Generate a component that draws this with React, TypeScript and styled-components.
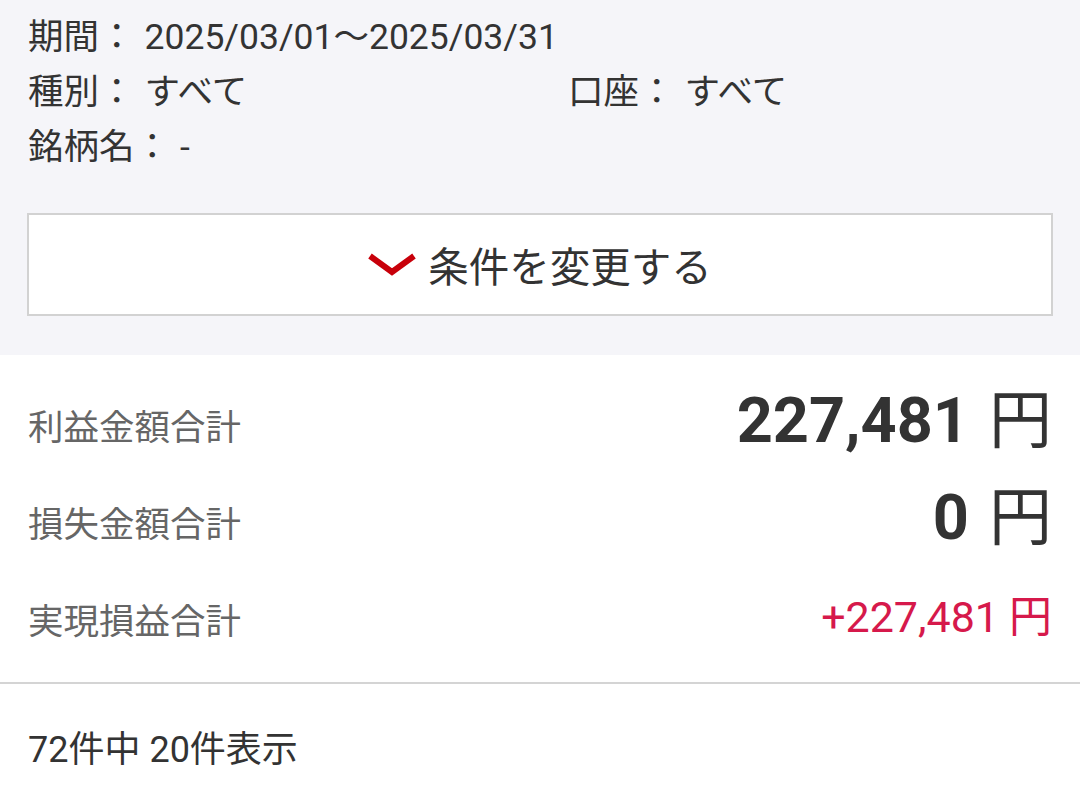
import styled, { createGlobalStyle } from 'styled-components';

const GlobalStyle = createGlobalStyle`
    html, body {
        margin: 0;
        padding: 0;
        background: #ffffff;
        font-family: Roboto, "Noto Sans CJK JP", sans-serif;
        color: #333333;
    }
`;

const Conditions = styled.section`
    background-color: #f5f5f9;
    padding: 10px 27px 39px 27px;
`;

const CondList = styled.div`
    display: grid;
    grid-template-columns: 540px 1fr;
    font-size: 35.5px;
    line-height: 55px;
    margin-left: 1px;
    margin-bottom: 38px;
`;

const CondItem = styled.div<{ $full?: boolean }>`
    grid-column: ${(p) => (p.$full ? '1 / span 2' : 'auto')};
    white-space: nowrap;
    color: #333333;
`;

const Colon = styled.span`
    margin-right: 10px;
`;

const ChangeButton = styled.button`
    display: flex;
    align-items: center;
    justify-content: center;
    gap: 12px;
    width: 100%;
    height: 103px;
    background: #ffffff;
    border: 2px solid #d2d2d2;
    font-family: Roboto, "Noto Sans CJK JP", sans-serif;
    font-size: 40.5px;
    color: #333333;
    cursor: pointer;
    padding: 0;
`;

const Summary = styled.section`
    padding: 21px 28px 15px 28px;
    border-bottom: 2px solid #d4d4d4;
`;

const Row = styled.div`
    display: flex;
    justify-content: space-between;
    align-items: center;
    height: 97px;
`;

const Label = styled.div`
    font-size: 35.5px;
    color: #666666;
`;

const Amount = styled.div<{ $red?: boolean }>`
    font-size: ${(p) => (p.$red ? '43px' : '63px')};
    font-weight: ${(p) => (p.$red ? 400 : 700)};
    color: ${(p) => (p.$red ? '#d6194b' : '#333333')};
    margin-bottom: ${(p) => (p.$red ? '12px' : '20px')};
    white-space: nowrap;
`;

const Yen = styled.span<{ $red?: boolean }>`
    font-weight: 400;
    margin-left: ${(p) => (p.$red ? '10px' : '20px')};
`;

const Count = styled.div`
    padding: 36px 28px;
    font-size: 36px;
    color: #333333;
`;

function Chevron() {
    return (
        <svg width="48" height="24" viewBox="0 0 48 24">
            <path d="M2 3 L24 19 L46 3" fill="none" stroke="#c8000a" strokeWidth="6" />
        </svg>
    );
}

const rows = [
    { label: '利益金額合計', value: '227,481', red: false },
    { label: '損失金額合計', value: '0', red: false },
    { label: '実現損益合計', value: '+227,481', red: true },
];

export default function App() {
    return (
        <>
            <GlobalStyle />
            <Conditions>
                <CondList>
                    <CondItem $full>期間<Colon>：</Colon>2025/03/01～2025/03/31</CondItem>
                    <CondItem>種別<Colon>：</Colon>すべて</CondItem>
                    <CondItem>口座<Colon>：</Colon>すべて</CondItem>
                    <CondItem $full>銘柄名<Colon>：</Colon>-</CondItem>
                </CondList>
                <ChangeButton>
                    <Chevron />
                    条件を変更する
                </ChangeButton>
            </Conditions>
            <Summary>
                {rows.map((r) => (
                    <Row key={r.label}>
                        <Label>{r.label}</Label>
                        <Amount $red={r.red}>
                            {r.value}
                            <Yen $red={r.red}>円</Yen>
                        </Amount>
                    </Row>
                ))}
            </Summary>
            <Count>72件中 20件表示</Count>
        </>
    );
}
